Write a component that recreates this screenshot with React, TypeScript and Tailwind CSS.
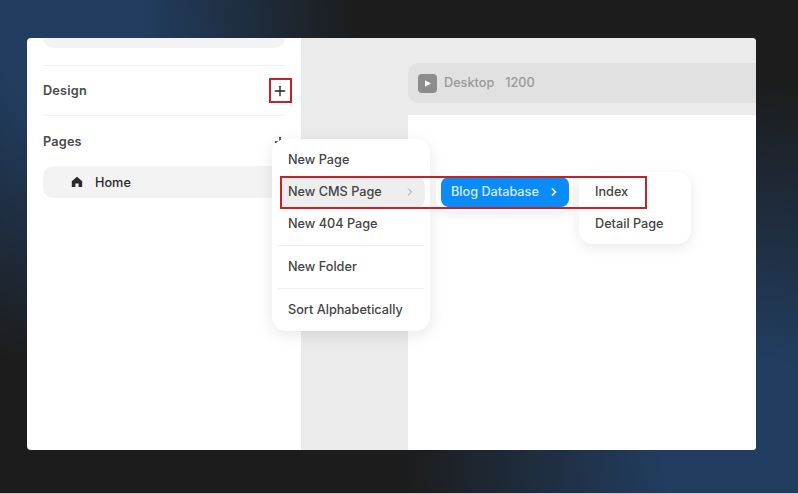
import React from 'react';
import { ChevronRight, Plus } from 'lucide-react';

const Divider = () => <div className="h-px bg-[#efefef]" />;

const MenuItem = ({ label, className = 'h-8' }: { label: string; className?: string }) => (
  <div className={`flex items-center px-4 text-[12.7px] font-medium text-[#444] ${className}`}>
    {label}
  </div>
);

const App: React.FC = () => {
  return (
    <div className="relative h-[494px] w-[798px] overflow-hidden bg-[#1c1c1c] font-['Inter',sans-serif]">
      <div className="absolute inset-0 bg-[radial-gradient(ellipse_290px_340px_at_70px_30px,#213d5f_0%,#213d5f_25%,#1c1c1c_100%)]" />
      <div className="absolute inset-0 bg-[radial-gradient(ellipse_350px_370px_at_750px_450px,#213d5f_0%,#213d5f_25%,transparent_100%)]" />
      <div className="absolute inset-x-0 bottom-0 h-px bg-[#c9c9c9]" />

      <div className="absolute left-[27px] top-[38px] flex h-[412px] w-[729px] overflow-hidden rounded-[4px] bg-white">
        {/* sidebar */}
        <aside className="w-[274px] shrink-0 px-4">
          <div className="h-[10px] rounded-b-[10px] bg-[#f3f3f3]" />
          <div className="mt-[17px]">
            <Divider />
          </div>
          <div className="flex h-[49px] items-center justify-between pt-px">
            <span className="text-[12.7px] font-semibold tracking-[0.2px] text-[#4a4a4a]">Design</span>
            <Plus size={16} strokeWidth={2} className="mr-[-3px] text-[#222]" />
          </div>
          <Divider />
          <div className="flex h-[50px] items-center justify-between pt-[2px]">
            <span className="text-[12.7px] font-semibold tracking-[0.2px] text-[#4a4a4a]">Pages</span>
            <Plus size={16} strokeWidth={2} className="mr-[-3px] text-[#222]" />
          </div>
          <div className="flex h-8 items-center rounded-[10px] bg-[#f3f3f3] pl-[28px]">
            <svg width="12" height="12" viewBox="0 0 12 12" className="fill-[#2b2b2b]">
              <path d="M6 .8 11.2 5.3V11H7.6V7.6H4.4V11H.8V5.3Z" />
            </svg>
            <span className="ml-3 pt-[2px] text-[12.7px] font-medium text-[#2b2b2b]">Home</span>
          </div>
        </aside>

        {/* canvas */}
        <main className="flex-1 bg-[#ebebeb] pl-[107px] pt-[25px]">
          <div className="flex h-10 items-center gap-[7px] rounded-l-[10px] bg-[#e1e1e1] pl-[10px]">
            <div className="flex h-[19px] w-[19px] items-center justify-center rounded-[4px] bg-[#8c8c8c]">
              <svg width="9" height="9" viewBox="0 0 9 9" className="fill-white">
                <path d="M2 1.2 8 4.5 2 7.8Z" />
              </svg>
            </div>
            <span className="flex gap-[11px] text-[12.7px] font-medium text-[#999]">
              <span>Desktop</span>
              <span>1200</span>
            </span>
          </div>
          <div className="mt-3 h-[335px] bg-white" />
        </main>
      </div>

      {/* new page menu */}
      <div className="absolute left-[272px] top-[139px] w-[158px] rounded-[14px] bg-white pb-[5px] pt-[5px] shadow-[0_4px_16px_rgba(0,0,0,0.1)]">
        <MenuItem label="New Page" />
        <div className="mr-[5px] ml-2 flex h-8 items-center justify-between rounded-l-[4px] rounded-r-[10px] bg-[#eeeeee] pl-2 pr-[9px] text-[12.7px] font-medium text-[#444]">
          New CMS Page
          <ChevronRight size={12} strokeWidth={2} className="text-[#999]" />
        </div>
        <MenuItem label="New 404 Page" />
        <div className="mx-[6px] mb-[6px] mt-[5px] h-px bg-[#efefef]" />
        <MenuItem label="New Folder" className="h-[30px]" />
        <div className="mx-[6px] mb-[5px] mt-[6px] h-px bg-[#efefef]" />
        <MenuItem label="Sort Alphabetically" />
      </div>

      {/* cms collection menu */}
      <div className="absolute left-[436px] top-[173px] w-[137px] rounded-[12px] bg-white p-1 shadow-[0_4px_12px_rgba(0,0,0,0.07)]">
        <div className="ml-px flex h-[30px] w-[128px] items-center justify-between rounded-[8px] bg-[#0a8cf8] pl-[10px] pr-[9px] text-[12.7px] font-medium text-[#d5ebff]">
          Blog Database
          <ChevronRight size={12} strokeWidth={3.5} className="text-white" />
        </div>
      </div>

      {/* page type menu */}
      <div className="absolute left-[579px] top-[172px] w-[112px] rounded-[14px] bg-white py-1 shadow-[0_4px_14px_rgba(0,0,0,0.09)]">
        <MenuItem label="Index" />
        <MenuItem label="Detail Page" />
      </div>

      {/* red annotations */}
      <div className="absolute left-[269px] top-[78px] h-[25px] w-[23px] border-2 border-[#c4232b]" />
      <div className="absolute left-[280px] top-[176px] h-[33px] w-[367px] border-2 border-[#c4232b]" />
    </div>
  );
};

export default App;
